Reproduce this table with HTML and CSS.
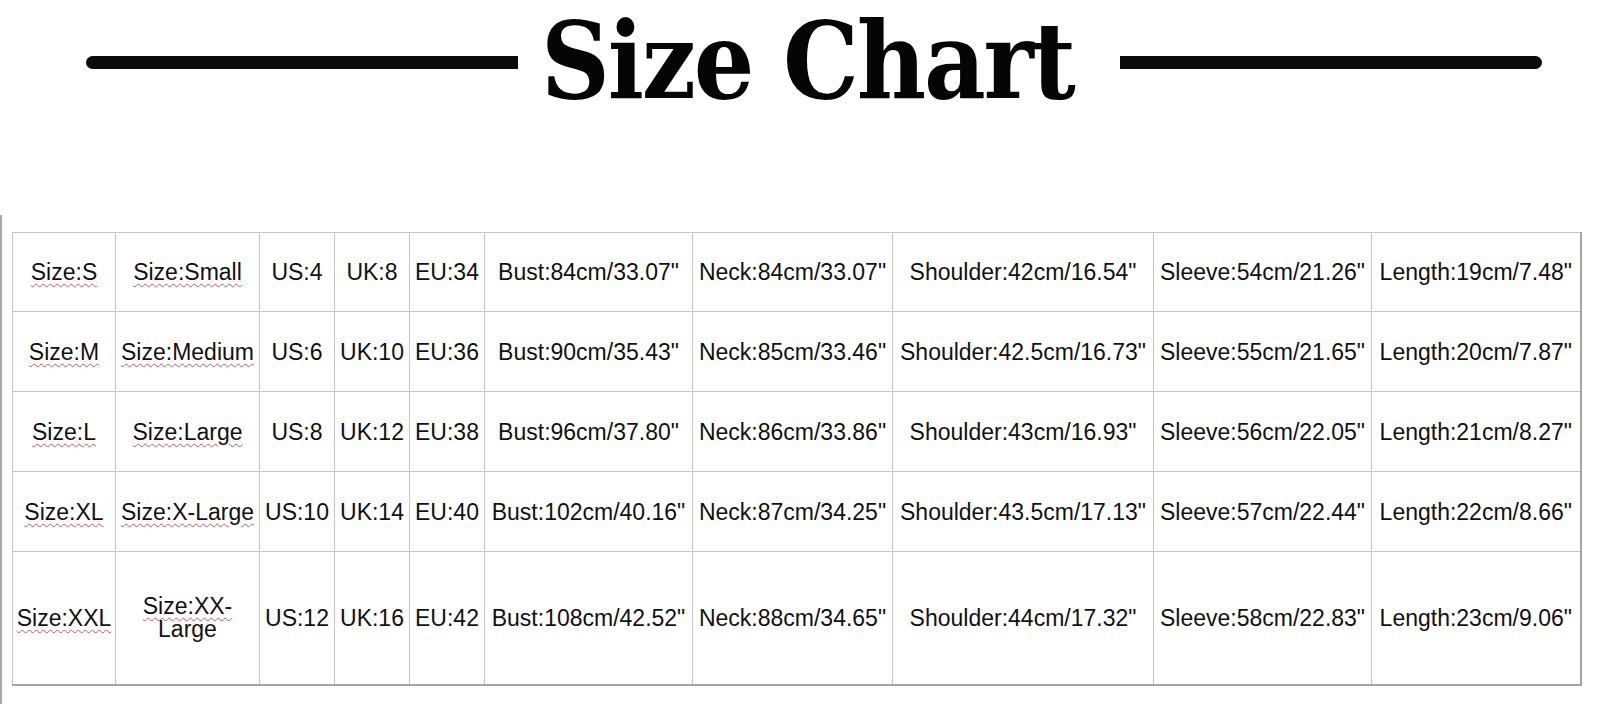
FILE: index.html
```html
<!DOCTYPE html>
<html lang="en">
<head>
<meta charset="utf-8">
<title>Size Chart</title>
<link rel="stylesheet" href="styles.css">
</head>
<body>
<header class="heading">
  <span class="rule rule-left"></span>
  <h1 class="title">Size Chart</h1>
  <span class="rule rule-right"></span>
</header>
<section class="chart-area">
  <table class="size-table">
    <colgroup>
      <col class="c-size"><col class="c-name"><col class="c-us"><col class="c-uk"><col class="c-eu">
      <col class="c-bust"><col class="c-neck"><col class="c-shoulder"><col class="c-sleeve"><col class="c-length">
    </colgroup>
    <tbody>
      <tr class="row">
        <td><span class="sq">Size:S</span></td><td><span class="sq">Size:Small</span></td>
        <td>US:4</td><td>UK:8</td><td>EU:34</td>
        <td>Bust:84cm/33.07"</td><td>Neck:84cm/33.07"</td><td>Shoulder:42cm/16.54"</td>
        <td>Sleeve:54cm/21.26"</td><td>Length:19cm/7.48"</td>
      </tr>
      <tr class="row">
        <td><span class="sq">Size:M</span></td><td><span class="sq">Size:Medium</span></td>
        <td>US:6</td><td>UK:10</td><td>EU:36</td>
        <td>Bust:90cm/35.43"</td><td>Neck:85cm/33.46"</td><td>Shoulder:42.5cm/16.73"</td>
        <td>Sleeve:55cm/21.65"</td><td>Length:20cm/7.87"</td>
      </tr>
      <tr class="row">
        <td><span class="sq">Size:L</span></td><td><span class="sq">Size:Large</span></td>
        <td>US:8</td><td>UK:12</td><td>EU:38</td>
        <td>Bust:96cm/37.80"</td><td>Neck:86cm/33.86"</td><td>Shoulder:43cm/16.93"</td>
        <td>Sleeve:56cm/22.05"</td><td>Length:21cm/8.27"</td>
      </tr>
      <tr class="row">
        <td><span class="sq">Size:XL</span></td><td><span class="sq">Size:X-Large</span></td>
        <td>US:10</td><td>UK:14</td><td>EU:40</td>
        <td>Bust:102cm/40.16"</td><td>Neck:87cm/34.25"</td><td>Shoulder:43.5cm/17.13"</td>
        <td>Sleeve:57cm/22.44"</td><td>Length:22cm/8.66"</td>
      </tr>
      <tr class="row row-tall">
        <td><span class="sq">Size:XXL</span></td><td class="two-line"><span class="sq">Size:XX-</span>Large</td>
        <td>US:12</td><td>UK:16</td><td>EU:42</td>
        <td>Bust:108cm/42.52"</td><td>Neck:88cm/34.65"</td><td>Shoulder:44cm/17.32"</td>
        <td>Sleeve:58cm/22.83"</td><td>Length:23cm/9.06"</td>
      </tr>
    </tbody>
  </table>
</section>
</body>
</html>
```

FILE: styles.css
```css
html, body {
  margin: 0;
  padding: 0;
  background: #ffffff;
}

body {
  width: 1600px;
  height: 728px;
  overflow: hidden;
  color: #111111;
}

.heading {
  display: flex;
  align-items: flex-start;
  padding-left: 86px;
  height: 116px;
}

.rule {
  display: block;
  height: 13px;
  margin-top: 56px;
  background: #0a0a0a;
  flex: none;
}

.rule-left {
  width: 432px;
  border-radius: 7px 0 0 7px;
}

.rule-right {
  width: 422px;
  border-radius: 0 7px 7px 0;
}

.title {
  box-sizing: border-box;
  width: 602px;
  margin: 0;
  padding-left: 23px;
  font-family: "DejaVu Serif Condensed", "DejaVu Serif", "Liberation Serif", serif;
  font-stretch: condensed;
  font-weight: bold;
  font-size: 106px;
  line-height: 121px;
  letter-spacing: -2.2px;
  color: #050505;
  white-space: nowrap;
  flex: none;
}

.chart-area {
  margin-top: 99px;
  border-left: 2px solid #a9a9a9;
  padding: 17px 0 18px 10px;
  width: 1570px;
}

.size-table {
  table-layout: fixed;
  border-collapse: collapse;
  width: 1568px;
  font-family: "Liberation Sans", Arial, sans-serif;
  font-size: 23px;
  line-height: 22px;
  color: #111111;
  border-right: 2px solid #a5a5a5;
  border-bottom: 2px solid #a5a5a5;
}

.size-table td {
  border: 1px solid #c4c4c4;
  padding: 0 1px;
  text-align: center;
  vertical-align: middle;
  white-space: normal;
}

.size-table td.two-line {
  line-height: 23px;
}

.row { height: 80px; }
.row:first-child { height: 79px; }
.row-tall { height: 133px; }

.c-size { width: 103px; }
.c-name { width: 144px; }
.c-us { width: 75px; }
.c-uk { width: 75px; }
.c-eu { width: 75px; }
.c-bust { width: 208px; }
.c-neck { width: 200px; }
.c-shoulder { width: 261px; }
.c-sleeve { width: 218px; }
.c-length { width: 209px; }

.sq {
  text-decoration: underline wavy #b65a6a;
  text-decoration-thickness: 1px;
  text-underline-offset: 3px;
}
```
